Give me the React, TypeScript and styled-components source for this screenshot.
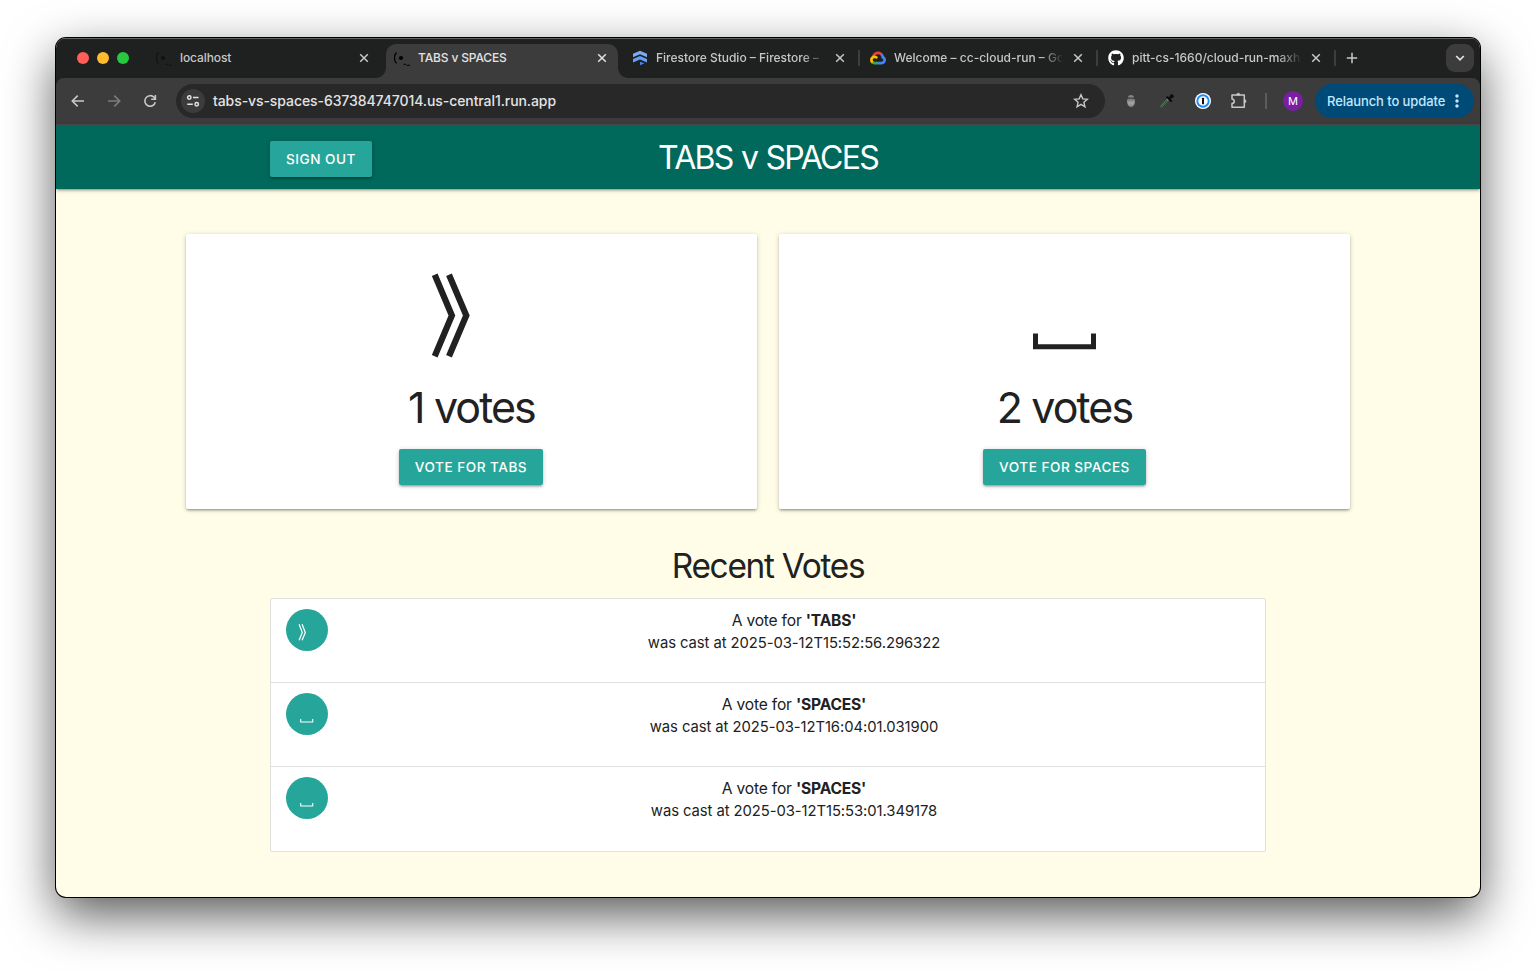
import React from "react";
import styled, { createGlobalStyle, css } from "styled-components";
import { FaGithub } from "react-icons/fa";
import { MdMoreVert } from "react-icons/md";

const GlobalStyle = createGlobalStyle`
  * { box-sizing: border-box; }
  body {
    margin: 0;
    background: #fff;
    font-family: Inter, "Liberation Sans", sans-serif;
    color: #212121;
  }
`;

const Desktop = styled.div`
  width: 1536px;
  height: 971px;
  padding: 38px 56px 74px;
  overflow: hidden;
`;

const BrowserWindow = styled.div`
  display: flex;
  flex-direction: column;
  height: 859px;
  overflow: hidden;
  border-radius: 10px;
  background: #fffde7;
  box-shadow: 0 0 0 1px #000, 0 18px 50px rgba(0, 0, 0, 0.66);
`;

const Chrome = styled.header`
  flex: none;
  background: #1f2120;
`;

const TabStrip = styled.div`
  display: flex;
  height: 40px;
  padding-left: 21px;
  border-top: 1px solid #636464;
`;

const Lights = styled.div`
  display: flex;
  align-items: center;
  gap: 8px;
  width: 71px;
  padding-bottom: 1px;
`;

const Light = styled.span<{ $color: string }>`
  width: 12px;
  height: 12px;
  border-radius: 50%;
  background: ${(p) => p.$color};
`;

const corner = css`
  content: "";
  position: absolute;
  bottom: 0;
  width: 10px;
  height: 10px;
`;

const TabItem = styled.div<{ $active?: boolean }>`
  position: relative;
  display: flex;
  align-items: center;
  width: 232px;
  height: 34px;
  margin: 5px 6px 0 0;
  padding: 0 8px 6px 8px;
  border-radius: 10px 10px 0 0;
  color: ${(p) => (p.$active ? "#e3e3e3" : "#c7c7c7")};
  ${(p) =>
    p.$active &&
    css`
      background: #3c3c3c;
      &::before {
        ${corner}
        left: -10px;
        background: radial-gradient(circle at 0 0, transparent 9.5px, #3c3c3c 10.2px);
      }
      &::after {
        ${corner}
        right: -10px;
        background: radial-gradient(circle at 100% 0, transparent 9.5px, #3c3c3c 10.2px);
      }
    `}
`;

const TabDivider = styled.span`
  position: absolute;
  right: -4px;
  top: 6px;
  width: 2px;
  height: 16px;
  background: #3c3e3d;
`;

const TabIcon = styled.span<{ $dim?: boolean }>`
  display: flex;
  width: 16px;
  height: 16px;
  margin-right: 8px;
  opacity: ${(p) => (p.$dim ? 0.45 : 1)};
`;

const TabTitle = styled.span<{ $spacing: number; $fade?: boolean }>`
  width: 168px;
  white-space: nowrap;
  font-size: 12px;
  font-weight: 450;
  line-height: 18px;
  letter-spacing: ${(p) => p.$spacing}px;
  ${(p) => p.$fade && "mask-image: linear-gradient(to right, #000 146px, transparent 170px);"}
`;

const TabClose = styled.span`
  display: flex;
  justify-content: center;
  width: 16px;
  margin-left: auto;
`;

const NewTab = styled.span`
  display: flex;
  align-items: center;
  padding: 0 0 1px 8px;
  color: #c7c7c7;
`;

const TabSearch = styled.span`
  display: flex;
  align-items: center;
  justify-content: center;
  width: 28px;
  height: 28px;
  margin: 5px 6px 0 auto;
  border-radius: 9px;
  background: #3c3c3c;
`;

const Toolbar = styled.div`
  display: flex;
  align-items: center;
  height: 47px;
  padding: 0 6px 1px 14px;
  border-radius: 8px 8px 0 0;
  background: #3c3c3c;
  border-bottom: 1px solid #4a4949;
`;

const ToolButton = styled.span<{ $w: number; $color?: string }>`
  display: flex;
  align-items: center;
  justify-content: center;
  width: ${(p) => p.$w}px;
  height: 36px;
  color: ${(p) => p.$color || "#c7c7c7"};
`;

const AddressBar = styled.div`
  display: flex;
  align-items: center;
  width: 929px;
  height: 34px;
  margin-left: 18px;
  padding: 0 16px 0 5px;
  border-radius: 17px;
  background: #282828;
  color: #c7c7c7;
`;

const SiteInfo = styled.span`
  display: flex;
  align-items: center;
  justify-content: center;
  width: 24px;
  height: 24px;
  margin-right: 8px;
  border-radius: 50%;
  background: #3c3c3c;
`;

const Url = styled.span`
  flex: 1;
  font-size: 14px;
  font-weight: 450;
  letter-spacing: -0.08px;
  color: #e3e3e3;
`;

const Extensions = styled.div`
  display: flex;
  align-items: center;
  margin-left: 8px;
`;

const ToolDivider = styled.span`
  width: 2px;
  height: 16px;
  margin: 0 16px 0 8px;
  background: #5c5c5c;
`;

const Profile = styled.span`
  display: flex;
  align-items: center;
  justify-content: center;
  width: 20px;
  height: 20px;
  border-radius: 50%;
  background: #7b1fa2;
  color: #fff;
  font-size: 11px;
`;

const Relaunch = styled.div`
  display: flex;
  align-items: center;
  width: 159px;
  height: 34px;
  margin-left: auto;
  padding-left: 12px;
  border-radius: 17px;
  background: #004a77;
  color: #c2e7ff;
  font-size: 13px;
  font-weight: 450;
  white-space: nowrap;
  letter-spacing: -0.08px;

  svg { margin-left: 2px; }
`;

const raised = css`
  box-shadow: 0 2px 2px 0 rgba(0, 0, 0, 0.14), 0 3px 1px -2px rgba(0, 0, 0, 0.12),
    0 1px 5px 0 rgba(0, 0, 0, 0.2);
`;

const NavBar = styled.nav`
  display: grid;
  grid-template-columns: 1fr auto 1fr;
  flex: none;
  height: 64px;
  padding: 0 214px;
  background: #00695c;
  ${raised}
`;

const Brand = styled.h1`
  margin: 0;
  color: #fff;
  font-size: 32px;
  font-weight: 440;
  line-height: 65px;
  letter-spacing: -1.7px;
  word-spacing: 1px;
`;

const Button = styled.button<{ $w: number; $nudge?: boolean }>`
  width: ${(p) => p.$w}px;
  height: 36px;
  margin-right: ${(p) => (p.$nudge ? 1 : 0)}px;
  padding: 0;
  border: 0;
  border-radius: 2px;
  background: #26a69a;
  color: #fff;
  font-family: inherit;
  font-size: 13.6px;
  font-weight: 450;
  line-height: 36px;
  letter-spacing: 0.5px;
  white-space: nowrap;
  ${raised}
`;

const SignOutSlot = styled.div`
  padding-top: 16px;
`;

const Cards = styled.section`
  display: flex;
  gap: 22px;
  padding: 45px 130px 0;
`;

const Card = styled.article`
  display: flex;
  flex-direction: column;
  align-items: center;
  flex: 1;
  height: 275px;
  padding-top: 34px;
  border-radius: 2px;
  background: #fff;
  ${raised}
`;

const VoteCount = styled.h3`
  margin: 18px 0 17px;
  font-size: 43px;
  font-weight: 430;
  line-height: 50px;
  letter-spacing: -1.9px;
`;

const Recent = styled.section`
  display: flex;
  flex-direction: column;
  align-items: center;
  padding: 0 214px;
`;

const RecentTitle = styled.h4`
  margin: 38px 0 13px;
  font-size: 33.4px;
  font-weight: 430;
  line-height: 38px;
  letter-spacing: -1.3px;
`;

const VoteList = styled.ul`
  width: 100%;
  margin: 0;
  padding: 0;
  list-style: none;
  border: 1px solid #e0e0e0;
  border-radius: 2px;
  background: #fff;
`;

const VoteRow = styled.li`
  display: flex;
  height: 84px;
  padding: 10px 20px 0 15px;
  border-bottom: 1px solid #e0e0e0;
  &:last-child { border-bottom: 0; }
`;

const Avatar = styled.span`
  display: flex;
  align-items: center;
  justify-content: center;
  width: 42px;
  height: 42px;
  margin-right: 15px;
  border-radius: 50%;
  background: #26a69a;
  color: #fff;
`;

const VoteText = styled.div`
  flex: 1;
  padding-top: 1px;
  text-align: center;
`;

const VoteLine = styled.div<{ $size: number; $spacing: number }>`
  font-size: ${(p) => p.$size}px;
  letter-spacing: ${(p) => p.$spacing}px;
  line-height: 22px;
  strong { font-weight: 650; }
`;

const stroke = { fill: "none", stroke: "currentColor" } as const;

const CloseIcon = () => (
  <svg width="10" height="10" viewBox="0 0 10 10" {...stroke} strokeWidth="1.5">
    <path d="M1.2 1.2l7.6 7.6M8.8 1.2L1.2 8.8" />
  </svg>
);

const PageFavicon = () => (
  <svg width="16" height="16" viewBox="0 0 16 16" fill="none" stroke="#000">
    <path d="M2.5 2.5C-.3 5.4-.3 10 2.500 13.500" strokeWidth="1.2" />
    <circle cx="7" cy="8" r="2.100" fill="#000" stroke="none" />
    <path d="M9.500 14.200h2.500M12.500 15.200h3.500" strokeWidth="1.100" />
  </svg>
);

const FirestoreIcon = () => (
  <svg width="16" height="16" viewBox="0 0 16 16">
    <path d="M8 .8l7 3v3.500l-7-3-7 3V3.800z" fill="#7baaf7" />
    <path d="M8 6l7 3v3.400l-7-3-7 3V9z" fill="#669df6" />
    <path d="M8 11.700l4.500 1.500L8 15.300z" fill="#4285f4" />
  </svg>
);

const CloudIcon = () => (
  <svg width="16" height="16" viewBox="0 0 256 206">
    <path fill="#ea4335" d="M170.252 56.819l22.253-22.253 1.483-9.37C153.437-11.677 88.976-7.496 52.42 33.92 42.267 45.423 34.734 59.764 30.717 74.573l7.97-1.123 44.505-7.34 3.436-3.513c19.797-21.742 53.27-24.667 76.128-6.168l7.496.39z" />
    <path fill="#4285f4" d="M224.205 73.918a100.249 100.249 0 0 0-30.217-48.722l-31.232 31.232a55.515 55.515 0 0 1 20.379 44.037v5.544c15.35 0 27.797 12.445 27.797 27.796 0 15.352-12.446 27.485-27.797 27.485h-55.671l-5.466 5.934v33.34l5.466 5.231h55.67c39.93.311 72.553-31.494 72.864-71.424a72.303 72.303 0 0 0-31.793-60.453" />
    <path fill="#34a853" d="M71.87 205.796h55.593V161.29H71.87a27.275 27.275 0 0 1-11.4-2.498l-7.887 2.42-22.409 22.253-1.952 7.574a72.22 72.22 0 0 0 43.648 14.757" />
    <path fill="#fbbc05" d="M71.87 61.425C31.94 61.663-.237 94.227.002 134.157a72.301 72.301 0 0 0 28.222 56.881l32.247-32.246c-13.99-6.323-20.206-22.786-13.883-36.776 6.323-13.99 22.786-20.206 36.776-13.883 6.165 2.786 11.103 7.724 13.889 13.889L129.5 89.776a72.277 72.277 0 0 0-57.63-28.35" />
  </svg>
);

const ArrowIcon = ({ flip }: { flip?: boolean }) => (
  <svg width="14" height="14" viewBox="0 0 14 14" {...stroke} strokeWidth="1.6">
    <path d={flip ? "M1 7h11.5M7.3 1.6L12.7 7l-5.4 5.4" : "M13 7H1.5M6.7 1.6L1.3 7l5.4 5.4"} />
  </svg>
);

const ReloadIcon = () => (
  <svg width="14" height="14" viewBox="0 0 14 14" {...stroke} strokeWidth="1.6">
    <path d="M12.3 8.3A5.3 5.3 0 1 1 11 3.3l1.3 1.3M12.4 1v4.2H8.2" />
  </svg>
);

const TuneIcon = () => (
  <svg width="14" height="14" viewBox="0 0 14 14" fill="none" stroke="#e3e3e3" strokeWidth="1.5">
    <circle cx="3.3" cy="3.5" r="1.7" />
    <path d="M7 3.5h5.5M1.3 10.3h5.5" />
    <circle cx="10.7" cy="10.3" r="1.7" />
  </svg>
);

const StarIcon = () => (
  <svg width="16" height="16" viewBox="0 0 16 16" {...stroke} strokeWidth="1.4">
    <path d="M8 1.7l1.8 4.2 4.6.4-3.5 3 1.05 4.5L8 11.4l-3.95 2.4 1.05-4.5-3.5-3 4.6-.4z" />
  </svg>
);

const AcornIcon = () => (
  <svg width="12" height="16" viewBox="0 0 12 16">
    <defs>
      <linearGradient id="acorn" x1="0" y1="0" x2="0" y2="1">
        <stop offset="0" stopColor="#6c6c6c" />
        <stop offset="0.5" stopColor="#a5a5a5" />
        <stop offset="1" stopColor="#808080" />
      </linearGradient>
    </defs>
    <path d="M3 4.5C3.300 1.300 8.700 1.300 9 4.500z" fill="#858585" />
    <path d="M2.200 6.200C3 5.200 9 5.200 9.800 6.200 10.400 10 9 13.500 6 14.200 3 13.500 1.600 10 2.200 6.200z" fill="url(#acorn)" />
  </svg>
);

const DropperIcon = () => (
  <svg width="16" height="16" viewBox="0 0 16 16">
    <path d="M2.5 13.5L9.5 6" stroke="#7f9483" strokeWidth="2" strokeLinecap="round" />
    <path d="M2.3 14L8 7.8" stroke="#1d5b2d" strokeWidth="1.3" strokeLinecap="round" />
    <path d="M8.3 4.3l3.8 3.6M10 6L13 3" stroke="#0b0b0b" strokeWidth="2.2" strokeLinecap="round" />
    <circle cx="12.8" cy="3.2" r="1.9" fill="#0b0b0b" />
  </svg>
);

const OnePasswordIcon = () => (
  <svg width="16" height="16" viewBox="0 0 16 16">
    <circle cx="8" cy="8" r="8" fill="#fff" />
    <circle cx="8" cy="8" r="5.700" fill="#fff" stroke="#1a8cff" strokeWidth="1.9" />
    <rect x="7" y="4.7" width="2" height="6.6" rx=".6" fill="#111" />
  </svg>
);

const PuzzleIcon = () => (
  <svg width="18" height="18" viewBox="0 0 18 18" {...stroke} strokeWidth="1.5" strokeLinejoin="round">
    <path d="M2 3h12.300v12.300H2v-3.700c3-.3 3-4.300 0-4.600z" />
    <path d="M6.600 3a1.700 1.700 0 0 1 3.400 0zM14.300 7.500a1.600 1.600 0 0 1 0 3.300z" fill="currentColor" strokeWidth=".8" />
  </svg>
);

type Choice = "TABS" | "SPACES";

const TabsMark = () => (
  <svg width="96" height="96" viewBox="0 0 96 96" {...stroke} strokeWidth="6.2">
    <path d="M10.7 6.800L27.900 47.500 10.700 88.300M25 6.800L42.300 47.500 25 88.300" />
  </svg>
);

const SpacesMark = () => (
  <svg width="96" height="96" viewBox="0 0 96 96" {...stroke} strokeWidth="5">
    <path d="M18.500 65.500v13.200h58V65.500" />
  </svg>
);

const SmallTabsMark = () => (
  <svg width="18" height="18" viewBox="0 0 18 18" overflow="visible" {...stroke} strokeWidth="1.25">
    <path d="M1.1 3.3L4.300 11.500 1.100 19.300M4.100 3.300L7.300 11.500 4.100 19.300" />
  </svg>
);

const SmallSpacesMark = () => (
  <svg width="18" height="18" viewBox="0 0 18 18" {...stroke} strokeWidth="1.1">
    <path d="M2.700 14v3h12V14" />
  </svg>
);

const tabs = [
  { title: "localhost", icon: <PageFavicon />, dim: true, spacing: -0.1 },
  { title: "TABS v SPACES", icon: <PageFavicon />, active: true, spacing: -0.15 },
  { title: "Firestore Studio – Firestore –", icon: <FirestoreIcon />, divider: true, fade: true, spacing: 0 },
  { title: "Welcome – cc-cloud-run – Go", icon: <CloudIcon />, divider: true, fade: true, spacing: 0 },
  { title: "pitt-cs-1660/cloud-run-maxh", icon: <FaGithub size={16} color="#fff" />, divider: true, fade: true, spacing: 0 },
];

const candidates: { name: Choice; votes: number; buttonWidth: number }[] = [
  { name: "TABS", votes: 1, buttonWidth: 144 },
  { name: "SPACES", votes: 2, buttonWidth: 163 },
];

const recentVotes: { choice: Choice; time: string }[] = [
  { choice: "TABS", time: "2025-03-12T15:52:56.296322" },
  { choice: "SPACES", time: "2025-03-12T16:04:01.031900" },
  { choice: "SPACES", time: "2025-03-12T15:53:01.349178" },
];

export default function App() {
  return (
    <Desktop>
      <GlobalStyle />
      <BrowserWindow>
        <Chrome>
          <TabStrip>
            <Lights>
              <Light $color="#ff5f57" />
              <Light $color="#febc2e" />
              <Light $color="#28c840" />
            </Lights>
            {tabs.map((t) => (
              <TabItem key={t.title} $active={t.active}>
                <TabIcon $dim={t.dim}>{t.icon}</TabIcon>
                <TabTitle $spacing={t.spacing} $fade={t.fade}>{t.title}</TabTitle>
                <TabClose><CloseIcon /></TabClose>
                {t.divider && <TabDivider />}
              </TabItem>
            ))}
            <NewTab>
              <svg width="12" height="12" viewBox="0 0 12 12" {...stroke} strokeWidth="1.5">
                <path d="M6 .8v10.4M.8 6h10.4" />
              </svg>
            </NewTab>
            <TabSearch>
              <svg width="10" height="8" viewBox="0 0 10 8" fill="none" stroke="#e3e3e3" strokeWidth="1.7">
                <path d="M1.2 2L5 5.8 8.8 2" />
              </svg>
            </TabSearch>
          </TabStrip>
          <Toolbar>
            <ToolButton $w={16}><ArrowIcon /></ToolButton>
            <ToolButton $w={56} $color="#7c7c7c"><ArrowIcon flip /></ToolButton>
            <ToolButton $w={16}><ReloadIcon /></ToolButton>
            <AddressBar>
              <SiteInfo><TuneIcon /></SiteInfo>
              <Url>tabs-vs-spaces-637384747014.us-central1.run.app</Url>
              <StarIcon />
            </AddressBar>
            <Extensions>
              <ToolButton $w={36}><AcornIcon /></ToolButton>
              <ToolButton $w={36}><DropperIcon /></ToolButton>
              <ToolButton $w={36}><OnePasswordIcon /></ToolButton>
              <ToolButton $w={36}><PuzzleIcon /></ToolButton>
              <ToolDivider />
              <Profile>M</Profile>
            </Extensions>
            <Relaunch>
              Relaunch to update
              <MdMoreVert size={20} />
            </Relaunch>
          </Toolbar>
        </Chrome>
        <NavBar>
          <SignOutSlot><Button $w={102}>SIGN OUT</Button></SignOutSlot>
          <Brand>TABS v SPACES</Brand>
        </NavBar>
        <Cards>
          {candidates.map((c) => (
            <Card key={c.name}>
              {c.name === "TABS" ? <TabsMark /> : <SpacesMark />}
              <VoteCount>{c.votes} votes</VoteCount>
              <Button $w={c.buttonWidth} $nudge={c.name === "TABS"}>VOTE FOR {c.name}</Button>
            </Card>
          ))}
        </Cards>
        <Recent>
          <RecentTitle>Recent Votes</RecentTitle>
          <VoteList>
            {recentVotes.map((v) => (
              <VoteRow key={v.time}>
                <Avatar>{v.choice === "TABS" ? <SmallTabsMark /> : <SmallSpacesMark />}</Avatar>
                <VoteText>
                  <VoteLine $size={15.6} $spacing={-0.2}>
                    A vote for <strong>'{v.choice}'</strong>
                  </VoteLine>
                  <VoteLine $size={14.8} $spacing={-0.06}>was cast at {v.time}</VoteLine>
                </VoteText>
              </VoteRow>
            ))}
          </VoteList>
        </Recent>
      </BrowserWindow>
    </Desktop>
  );
}
